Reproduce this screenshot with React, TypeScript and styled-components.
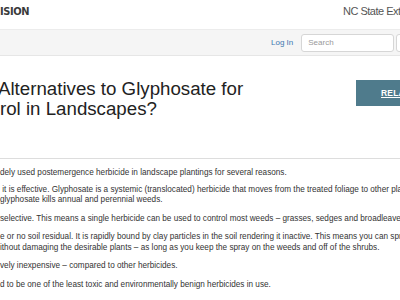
import * as React from "react";
import styled, { createGlobalStyle } from "styled-components";

const GlobalStyle = createGlobalStyle`
  html, body {
    margin: 0;
    padding: 0;
    background: #fff;
    overflow: hidden;
  }
  body {
    font-family: "Liberation Sans", Arial, sans-serif;
    color: #333;
  }
`;

const paragraphs: { lines: string[]; gap: number }[] = [
  {
    lines: ["dely used postemergence herbicide in landscape plantings for several reasons."],
    gap: 6,
  },
  {
    lines: [
      " it is effective. Glyphosate is a systemic (translocated) herbicide that moves from the treated foliage to other plant parts",
      "glyphosate kills annual and perennial weeds.",
    ],
    gap: 8,
  },
  {
    lines: ["selective. This means a single herbicide can be used to control most weeds – grasses, sedges and broadleaves."],
    gap: 8,
  },
  {
    lines: [
      "e or no soil residual. It is rapidly bound by clay particles in the soil rendering it inactive. This means you can spray",
      "ithout damaging the desirable plants – as long as you keep the spray on the weeds and off of the shrubs.",
    ],
    gap: 8,
  },
  {
    lines: ["vely inexpensive – compared to other herbicides."],
    gap: 8,
  },
  {
    lines: ["d to be one of the least toxic and environmentally benign herbicides in use."],
    gap: 8,
  },
];

const App: React.FunctionComponent = () => {
  return (
    <Page>
      <GlobalStyle />
      <TopBar>
        <Brand>ISION</Brand>
        <SiteName>NC State Extension</SiteName>
      </TopBar>
      <NavBar>
        <LogIn href="#">Log In</LogIn>
        <SearchBox placeholder="Search" />
        <SearchBox placeholder="" narrow />
      </NavBar>
      <TitleRow>
        <Title>
          <TitleLine shift={-2}>Alternatives to Glyphosate for</TitleLine>
          <TitleLine shift={0}>rol in Landscapes?</TitleLine>
        </Title>
        <RelatedButton>
          <span>RELATED</span>
        </RelatedButton>
      </TitleRow>
      <Rule />
      <Body>
        {paragraphs.map((p, i) => (
          <Paragraph key={i} gap={p.gap}>
            {p.lines.map((l, j) => (
              <Line key={j}>{l}</Line>
            ))}
          </Paragraph>
        ))}
      </Body>
    </Page>
  );
};

const Page = styled.div`
  width: 400px;
  height: 300px;
  overflow: hidden;
  background: #fff;
`;

const TopBar = styled.div`
  display: flex;
  align-items: flex-start;
  height: 29px;
  box-sizing: border-box;
  padding-top: 4px;
  overflow: hidden;
  white-space: nowrap;
`;

const Brand = styled.div`
  flex: 0 0 343px;
  font-family: "DejaVu Sans Condensed", "DejaVu Sans", sans-serif;
  font-stretch: condensed;
  font-weight: 600;
  font-size: 11px;
  line-height: 15px;
  letter-spacing: -0.4px;
  color: #3a3a3a;
`;

const SiteName = styled.div`
  flex-shrink: 0;
  font-size: 11px;
  line-height: 15px;
  letter-spacing: -0.5px;
  color: #555;
`;

const NavBar = styled.div`
  display: flex;
  align-items: center;
  height: 27px;
  box-sizing: border-box;
  padding-left: 271px;
  background: #f5f5f5;
  border-top: 1px solid #ececec;
  border-bottom: 1px solid #e6e6e6;
  overflow: hidden;
  white-space: nowrap;
`;

const LogIn = styled.a`
  flex-shrink: 0;
  font-size: 8px;
  color: #3f78b0;
  text-decoration: none;
  margin-right: 8px;
`;

const SearchBox = styled.input<{ narrow?: boolean }>`
  flex: 0 0 ${(p) => (p.narrow ? "40px" : "93px")};
  width: ${(p) => (p.narrow ? "40px" : "93px")};
  height: 18px;
  box-sizing: border-box;
  margin: 0 ${(p) => (p.narrow ? "0" : "2px")} 0 0;
  padding: 0 6px;
  border: 1px solid #d6d6d6;
  border-radius: 3px;
  background: #fff;
  font-family: "Liberation Sans", Arial, sans-serif;
  font-size: 8px;
  color: #333;
  outline: none;

  &::placeholder {
    color: #9a9a9a;
  }
`;

const TitleRow = styled.div`
  display: flex;
  align-items: flex-start;
  margin-top: 23px;
  white-space: nowrap;
  overflow: hidden;
`;

const Title = styled.h1`
  flex: 0 0 356px;
  margin: 0;
  font-size: 18.7px;
  line-height: 20px;
  font-weight: normal;
  color: #222;
`;

const TitleLine = styled.div<{ shift: number }>`
  margin-left: ${(p) => p.shift}px;
`;

const RelatedButton = styled.div`
  flex: 0 0 80px;
  height: 26px;
  margin-top: 1px;
  display: flex;
  align-items: center;
  padding-left: 25px;
  box-sizing: border-box;
  background: #4f7b8c;
  color: #fff;
  font-size: 8.5px;
  font-weight: bold;
  text-decoration: underline;
  letter-spacing: 0.2px;
`;

const Rule = styled.div`
  height: 1px;
  margin-top: 39px;
  background: #dddddd;
`;

const Body = styled.div`
  margin-top: 9px;
`;

const Paragraph = styled.p<{ gap: number }>`
  margin: 0 0 ${(p) => p.gap}px;
  font-size: 8.2px;
  line-height: 10.5px;
  color: #333;
`;

const Line = styled.span`
  display: block;
  white-space: pre;
  overflow: hidden;
`;

export default App;
